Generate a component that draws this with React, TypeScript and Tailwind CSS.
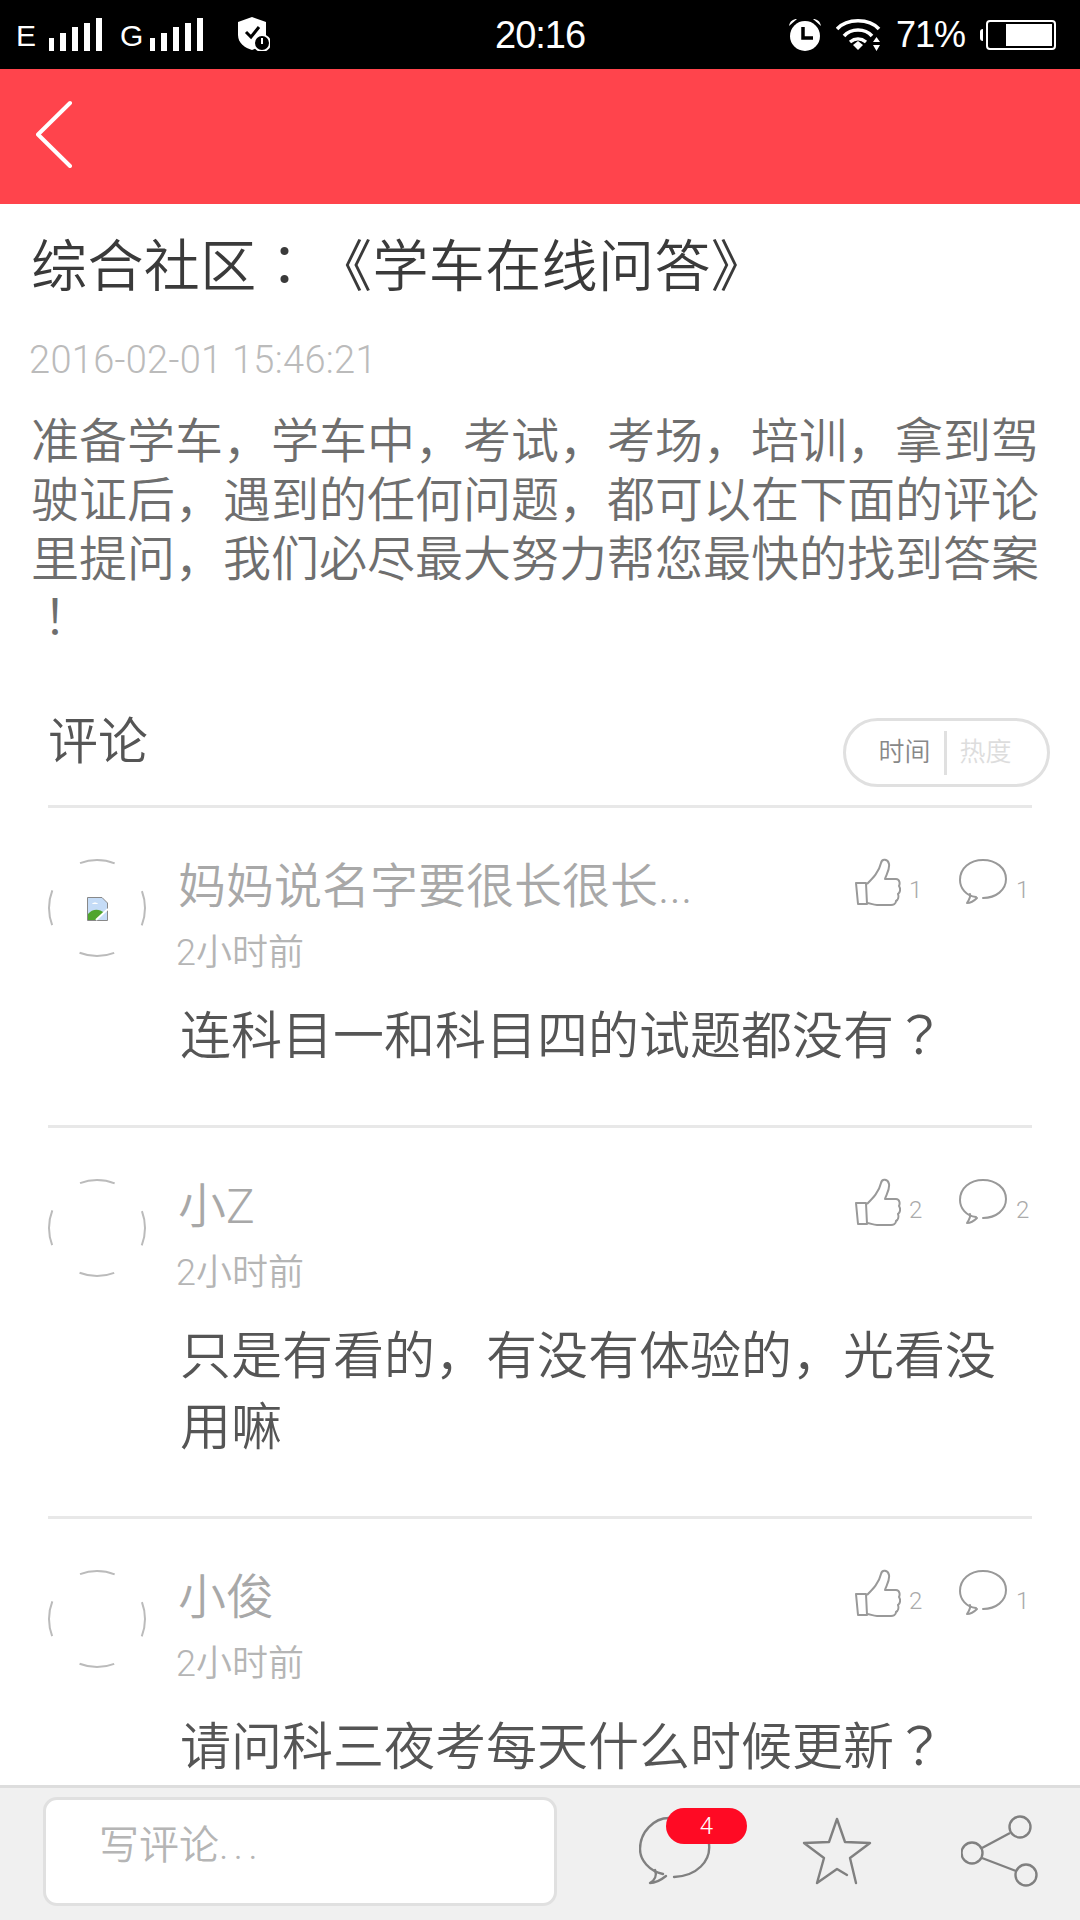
const font = "font-['Roboto','Noto_Sans_CJK_SC',sans-serif]";

function Bars() {
  return (
    <svg width="53" height="33" viewBox="0 0 53 33" fill="#fff">
      <rect x="0" y="20" width="5" height="13" />
      <rect x="11" y="15" width="6" height="18" />
      <rect x="23" y="9" width="6" height="24" />
      <rect x="35" y="5" width="6" height="28" />
      <rect x="47" y="0" width="6" height="33" />
    </svg>
  );
}

function Shield() {
  return (
    <svg width="32" height="34" viewBox="0 0 32 34">
      <path d="M14 0 L28 5 V18 C28 26 20 31 14 33 C7 31 0 26 0 18 V5 Z" fill="#fff" />
      <path d="M8 15 L13 20 L21 10" fill="none" stroke="#000" strokeWidth="3" />
      <circle cx="24" cy="26" r="8" fill="#000" stroke="#fff" strokeWidth="2" />
      <path d="M24 21 V27" stroke="#fff" strokeWidth="2" />
    </svg>
  );
}

function Alarm() {
  return (
    <svg width="34" height="34" viewBox="0 0 34 34">
      <circle cx="17" cy="18" r="15" fill="#fff" />
      <path d="M15 9 V20 H25" fill="none" stroke="#000" strokeWidth="3.5" />
      <path d="M1 8 C2 3 5 1 9 1 Z M33 8 C32 3 29 1 25 1 Z" fill="#fff" />
    </svg>
  );
}

function Wifi() {
  return (
    <svg width="46" height="34" viewBox="0 0 46 34" fill="none" stroke="#fff" strokeWidth="3.5">
      <path d="M1 11 C11 0 33 0 43 11" />
      <path d="M8 18 C15 10 29 10 36 18" />
      <path d="M14 24 C19 20 25 20 30 24" />
      <path d="M17 27 L22 23 L27 27 L22 32 Z" fill="#fff" stroke="none" />
      <path d="M37 24 L40.5 19 L44 24 Z M37 27 H44 L40.5 33 Z" fill="#fff" stroke="none" />
    </svg>
  );
}

function StatusBar() {
  return (
    <div className="h-[69px] bg-black flex items-center text-white relative shrink-0 font-['Liberation_Sans',sans-serif]">
      <div className="flex items-end pl-[16px] h-[33px] mt-[-1px]">
        <span className="text-[30px] leading-[30px] w-[33px]">E</span>
        <Bars />
        <span className="text-[30px] leading-[30px] w-[30px] ml-[18px]">G</span>
        <Bars />
        <span className="ml-[35px]"><Shield /></span>
      </div>
      <div className="absolute left-[495px] top-[13px] text-[38px] leading-[44px] tracking-[-1px]">20:16</div>
      <div className="ml-auto flex items-center pr-[24px]">
        <Alarm />
        <span className="ml-[14px]"><Wifi /></span>
        <span className="ml-[14px] text-[36px] leading-[40px] tracking-[-1px]">71%</span>
        <div className="ml-[15px] w-[3px] h-[12px] bg-white rounded-l-sm" />
        <div className="ml-[3px] w-[70px] h-[30px] border-[2px] border-white rounded-[4px] flex justify-end p-[2px]">
          <div className="w-[46px] bg-white" />
        </div>
      </div>
    </div>
  );
}

function Header() {
  return (
    <div className="h-[135px] bg-[#ff444c] flex items-center pl-[36px] pb-[5px] shrink-0">
      <svg width="38" height="68" viewBox="0 0 38 68" fill="none" stroke="#fff" strokeWidth="4" strokeLinecap="round" strokeLinejoin="round">
        <path d="M34 3 L2 34.5 L34 66" />
      </svg>
    </div>
  );
}

function Avatar({ broken }: { broken?: boolean }) {
  return (
    <div className="w-[98px] h-[98px] shrink-0 relative flex items-center justify-center">
      <svg width="98" height="98" viewBox="0 0 98 98" className="absolute inset-0" fill="none">
        <circle cx="49" cy="49" r="48" stroke="#bbb" strokeWidth="2" strokeDasharray="35.4 40" strokeDashoffset="17.7" />
      </svg>
      {broken && (
        <svg width="21" height="24" viewBox="0 0 21 24" className="relative mt-[1px]">
          <path d="M0.5 0.5 H15 L20.5 6 V23.5 H0.5 Z" fill="#c5dcf7" stroke="#888" />
          <path d="M1 23 V17 C5 12 12 11 17 16 L10 23 Z" fill="#4fa52d" />
          <path d="M9 23 L21 12" stroke="#fff" strokeWidth="2" />
          <path d="M5 7 C6 5 10 5 11 7 Z" fill="#fff" />
        </svg>
      )}
    </div>
  );
}

function LikeIcon() {
  return (
    <svg width="46" height="50" viewBox="0 0 46 50" fill="none" stroke="#999" strokeWidth="2" strokeLinejoin="round">
      <path d="M1 25 H11 L12 46 H3 Z" />
      <path d="M12 26 C18 20 24 14 26 5 C27 0 33 1 34 6 C35 12 31 17 30 21 H41 C45 21 45 26 44 28 C46 31 45 35 43 36 C44 39 43 42 41 43 C41 46 38 47 36 47 H22 C18 47 15 45 12 45" />
    </svg>
  );
}

function BubbleIcon() {
  return (
    <svg width="48" height="46" viewBox="0 0 48 46" fill="none" stroke="#999" strokeWidth="2" strokeLinejoin="round" strokeLinecap="round">
      <path d="M17 39 C7 38 1 30 1 22 C1 10 11 2 24 2 C37 2 47 10 47 21 C47 32 37 40 24 40" />
      <path d="M11 36 C12 39 10 42 8 45 C12 45 15 43 18 40" />
    </svg>
  );
}

function Comment({ name, text, likes, replies, broken }: { name: string; text: React.ReactNode; likes: number; replies: number; broken?: boolean }) {
  return (
    <div className="flex gap-[32px] pt-[51px] pb-[53px] border-b-[3px] border-[#e8e8e8]">
      <Avatar broken={broken} />
      <div className="flex-1 min-w-0">
        <div className="flex justify-between items-start">
          <div className="text-[48px] leading-[50px] text-[#a8a8a8] font-[350] mt-[3px]">{name}</div>
          <div className="flex items-start mt-[-1px] pr-[1px]">
            <LikeIcon />
            <span className="text-[24px] leading-[28px] text-[#aaa] font-light w-[58px] pl-[8px] mt-[18px]">{likes}</span>
            <BubbleIcon />
            <span className="text-[24px] leading-[28px] text-[#aaa] font-light ml-[9px] mt-[18px] w-[15px]">{replies}</span>
          </div>
        </div>
        <div className="text-[36px] leading-[40px] text-[#b5b5b5] mt-[21px] ml-[-2px] font-[350]">2小时前</div>
        <div className="text-[51px] leading-[71px] text-[#555] mt-[28px] pl-[2px] font-[350]">{text}</div>
      </div>
    </div>
  );
}

function Footer() {
  return (
    <div className="h-[135px] shrink-0 bg-[#f0f0f0] border-t-[3px] border-[#ddd] flex items-start">
      <div className="ml-[43px] mt-[9px] w-[514px] h-[109px] bg-white border-[3px] border-[#e0e0e0] rounded-[14px] flex items-center pl-[53px] text-[40px] text-[#b5b5b5] font-[350] pb-[12px]">
        写评论<span className="tracking-[5px]">...</span>
      </div>
      <div className="relative ml-[82px] mt-[28px] w-[73px] h-[70px]">
        <svg width="73" height="70" viewBox="0 0 73 70" fill="none" stroke="#808080" strokeWidth="2.4" strokeLinecap="round" strokeLinejoin="round">
          <path d="M24 58 C10 55 1 44 1 33 C1 16 15 2 30 2 M70 28 C72 45 58 60 35 61" />
          <path d="M16 54 C18 59 16 64 11 67 C17 67 22 64 27 60" />
        </svg>
        <div className="absolute left-[27px] top-[-8px] w-[81px] h-[36px] rounded-full bg-[#ff0a24] text-white text-[24px] leading-[36px] text-center font-light">4</div>
      </div>
      <div className="ml-[89px] mt-[29px]">
        <svg width="74" height="68" viewBox="0 0 74 68" fill="none" stroke="#808080" strokeWidth="2.4" strokeLinecap="round" strokeLinejoin="round">
          <path d="M55 66 L49 41 L69 26 L44 25 L36 2 L28 25 L3 26 L23 41 L16 66 L36 52 L46 58" />
        </svg>
      </div>
      <div className="ml-[86px] mt-[27px]">
        <svg width="78" height="72" viewBox="0 0 78 72" fill="none" stroke="#808080" strokeWidth="2.4">
          <circle cx="59" cy="12" r="10.5" />
          <circle cx="11" cy="38" r="10.5" />
          <circle cx="65" cy="60" r="10.5" />
          <path d="M49 18 L21 33 M21 43 L55 56" />
        </svg>
      </div>
    </div>
  );
}

export default function App() {
  return (
    <div className={`w-[1080px] h-[1920px] bg-white flex flex-col overflow-hidden [text-spacing-trim:space-all] ${font}`}>
      <StatusBar />
      <Header />
      <div className="flex-1 min-h-0 overflow-hidden">
        <div className="pl-[31px] pr-[30px]">
          <h1 className="text-[56px] leading-[70px] text-[#3a3a3a] pt-[28px] font-[350] tracking-[0.4px]">
            综合社区<span className="font-['Noto_Sans_CJK_TC'] leading-none mr-[3px]">：</span>《学车在线问答》
          </h1>
          <div className="text-[38px] leading-[40px] text-[#bbb] mt-[38px] ml-[-2px] tracking-[0.3px] font-light">2016-02-01 15:46:21</div>
          <p className="text-[48px] leading-[59px] text-[#6e6e6e] mt-[32px] font-[350] [line-break:anywhere]">
            准备学车，学车中，考试，考场，培训，拿到驾驶证后，遇到的任何问题，都可以在下面的评论里提问，我们必尽最大努力帮您最快的找到答案<span className="font-['Noto_Sans_CJK_TC'] leading-none [vertical-align:10px]">！</span>
          </p>
        </div>
        <div className="px-[48px] mt-[26px]">
          <div className="flex items-start justify-between border-b-[3px] border-[#e8e8e8] h-[125px]">
            <div className="text-[50px] leading-[60px] text-[#555] font-[350] mt-[29px]">评论</div>
            <div className="mr-[-18px] mt-[35px] w-[207px] h-[69px] rounded-full border-[3px] border-[#e0e0e0] flex items-center justify-center text-[26px] font-[350] pr-[3px]">
              <span className="text-[#888]">时间</span>
              <span className="w-[3px] h-[44px] bg-[#e0e0e0] mx-[13px]" />
              <span className="text-[#ddd]">热度</span>
            </div>
          </div>
          <Comment name="妈妈说名字要很长很长..." text={<>连科目一和科目四的试题都没有<span className="font-['Noto_Sans_CJK_TC'] leading-none">？</span></>} likes={1} replies={1} broken />
          <Comment name="小Z" text="只是有看的，有没有体验的，光看没用嘛" likes={2} replies={2} />
          <Comment name="小俊" text={<>请问科三夜考每天什么时候更新<span className="font-['Noto_Sans_CJK_TC'] leading-none">？</span></>} likes={2} replies={1} />
        </div>
      </div>
      <Footer />
    </div>
  );
}
